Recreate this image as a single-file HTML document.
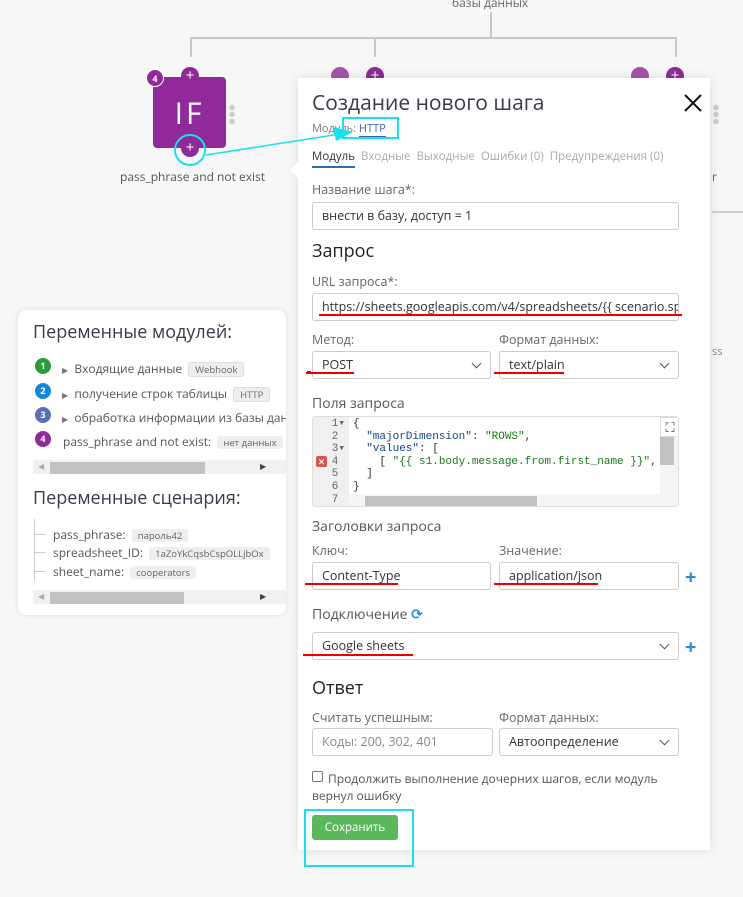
<!DOCTYPE html>
<html><head><meta charset="utf-8"><style>
*{box-sizing:border-box;margin:0;padding:0}
body{width:743px;height:897px;background:#f7f7f7;font-family:"Open Sans","Liberation Sans","DejaVu Sans",sans-serif;color:#555;position:relative;overflow:hidden;font-size:12px}
.a{position:absolute}
.ln{position:absolute;background:#c8c8c8}
.pc{position:absolute;width:18px;height:18px;border-radius:50%;background:#8e2b97;color:#fff;text-align:center;line-height:17px;font-size:15px}
.modal{position:absolute;left:298px;top:78px;width:412px;height:772px;background:#fff;box-shadow:0 0 10px rgba(0,0,0,.12)}
.lbl{position:absolute;font-size:12.5px;color:#666}
.inp{position:absolute;height:28px;border:1px solid #ccc;border-radius:3px;background:#fff;font-size:12.5px;color:#333;padding:0 9px;line-height:26px;white-space:nowrap;overflow:hidden}
.sel:after{content:"";position:absolute;right:10px;top:8px;width:6px;height:6px;border-right:1.5px solid #555;border-bottom:1.5px solid #555;transform:rotate(45deg)}
.h{position:absolute;font-size:18px;color:#222}
.h2{position:absolute;font-size:14px;color:#555}
.red{position:absolute;height:2px;background:#e00}
.plus{position:absolute;color:#2a8bd6;font-size:20px;font-weight:bold}
.pop{position:absolute;left:18px;top:310px;width:268px;height:305px;background:#fff;border-radius:8px;box-shadow:0 0 6px rgba(0,0,0,.1);overflow:hidden}
.num{position:absolute;width:16px;height:16px;border-radius:50%;color:#fff;font-size:9px;font-weight:bold;text-align:center;line-height:16px}
.tag{display:inline-block;background:#eee;border:1px solid #ddd;border-radius:3px;font-size:9.5px;padding:0 6px;line-height:13px;color:#666;margin-left:3px}
.row{position:absolute;font-size:12px;color:#555;white-space:nowrap}
.sb{position:absolute;height:14px;background:#f1f1f1}
.code{font-family:"Liberation Mono",monospace;font-size:11px;position:absolute;white-space:pre;line-height:12.6px}
</style></head><body>
<div class="a" style="left:452px;top:-6px;font-size:12px;color:#666">базы данных</div>
<div class="ln" style="left:490px;top:12px;width:2px;height:27px"></div>
<div class="ln" style="left:190px;top:37px;width:487px;height:2px"></div>
<div class="ln" style="left:190px;top:37px;width:2px;height:20px"></div>
<div class="ln" style="left:374px;top:37px;width:2px;height:20px"></div>
<div class="ln" style="left:675px;top:37px;width:2px;height:20px"></div>
<div class="a" style="left:153px;top:77px;width:73px;height:71px;background:#91299b;border-radius:4px;color:#fff;font-size:30px;text-align:center;line-height:72px;letter-spacing:3px">IF</div>
<div class="num" style="left:146px;top:69px;width:18px;height:18px;line-height:18px;background:#91299b;border:1px solid #fff">4</div>
<div class="pc" style="left:181px;top:67px">+</div>
<div class="pc" style="left:181px;top:139px">+</div>
<div class="pc" style="left:331px;top:67px;opacity:.8"></div><div class="pc" style="left:366px;top:67px">+</div>
<div class="pc" style="left:631px;top:67px;opacity:.8"></div><div class="pc" style="left:666px;top:67px">+</div>
<div class="a" style="left:229px;top:104px;width:6px;height:20px;background:radial-gradient(circle,#ccc 2.5px,transparent 3px) 0 0/6px 7px"></div>
<div class="a" style="left:713px;top:104px;width:6px;height:20px;background:radial-gradient(circle,#ccc 2.5px,transparent 3px) 0 0/6px 7px"></div>
<div class="a" style="left:120px;top:168px;font-size:12px;color:#555">pass_phrase and not exist</div>
<div class="a" style="left:712px;top:168px;font-size:12px;color:#666">r</div>
<div class="ln" style="left:712px;top:211px;width:31px;height:2px;background:#ccc"></div>
<div class="a" style="left:712px;top:344px;font-size:11px;color:#888">ss</div>

<div class="modal">
<div class="a" style="left:-8px;top:84px;width:0;height:0;border:8px solid transparent;border-right-color:#fff;border-left:0"></div>
<div class="a" style="left:14px;top:11px;font-size:21px;color:#3a3a4a">Создание нового шага</div>
<svg class="a" style="left:385px;top:15px" width="20" height="20"><path d="M2 2L18 18M18 2L2 18" stroke="#111" stroke-width="2"/></svg>
<div class="a" style="left:14px;top:43px;font-size:11px;color:#777">Модуль: <span style="color:#3b64b0;border-bottom:1px solid #3b64b0">HTTP</span></div>
<div class="a" style="left:44px;top:39px;width:57px;height:22px;border:2px solid #19e0ec"></div>
<div class="a" style="left:14px;top:71px;font-size:11.5px;color:#aaa;white-space:nowrap"><span style="color:#333;border-bottom:2px solid #2a6fb0;padding-bottom:2px">Модуль</span>&nbsp; Входные &nbsp;Выходные &nbsp;Ошибки (0) &nbsp;Предупреждения (0)</div>
<div class="lbl" style="left:14px;top:103px">Название шага*:</div>
<div class="inp" style="left:14px;top:124px;width:367px">внести в базу, доступ = 1</div>
<div class="h" style="left:14px;top:161px">Запрос</div>
<div class="lbl" style="left:14px;top:195px">URL запроса*:</div>
<div class="inp" style="left:14px;top:215px;width:367px">https://sheets.googleapis.com/v4/spreadsheets/{{ scenario.spreadsheet_ID }}</div>
<div class="red" style="left:21px;top:236px;width:363px"></div>
<div class="lbl" style="left:14px;top:253px">Метод:</div>
<div class="lbl" style="left:201px;top:253px">Формат данных:</div>
<div class="inp sel" style="left:14px;top:273px;width:179px">POST</div>
<div class="inp sel" style="left:201px;top:273px;width:180px">text/plain</div>
<div class="red" style="left:8px;top:294px;width:48px"></div>
<div class="red" style="left:196px;top:294px;width:70px"></div>
<div class="h2" style="left:14px;top:316px">Поля запроса</div>
<div class="a" style="left:14px;top:338px;width:367px;height:91px;border:1px solid #ddd;border-radius:3px;overflow:hidden">
 <div class="a" style="left:0;top:0;width:36px;height:91px;background:#f0f0f0"></div>
 <div class="code" style="left:4px;top:1px;color:#666;text-align:right;width:28px">1▾
2 
3▾
4 
5 
6 
7 </div>
 <div class="a" style="left:3px;top:39px;width:11px;height:11px;background:#d9534f;border-radius:2px;color:#fff;font-size:9px;line-height:11px;text-align:center">✕</div>
 <div class="code" style="left:40px;top:1px;color:#333">{
  <span style="color:#14428f">"majorDimension"</span>: <span style="color:#1a7a1a">"ROWS"</span>,
  <span style="color:#14428f">"values"</span>: [
    [ <span style="color:#1a7a1a">"{{ s1.body.message.from.first_name }}"</span>, {{ s
  ]
}</div>
 <div class="a" style="left:347px;top:0;width:20px;height:91px;background:#f5f5f5"></div>
 <div class="a" style="left:347px;top:18px;width:14px;height:30px;background:#c2c2c2"></div>
 <div class="a" style="left:347px;top:0;width:20px;height:20px;background:#fff;border:1px solid #ddd;font-size:13px;text-align:center;line-height:18px;color:#333">⛶</div>
 <div class="a" style="left:36px;top:77px;width:311px;height:14px;background:#f5f5f5"></div>
 <div class="a" style="left:52px;top:79px;width:172px;height:12px;background:#c2c2c2"></div>
</div>
<div class="h2" style="left:14px;top:439px">Заголовки запроса</div>
<div class="lbl" style="left:14px;top:464px">Ключ:</div>
<div class="lbl" style="left:201px;top:464px">Значение:</div>
<div class="inp" style="left:14px;top:484px;width:179px">Content-Type</div>
<div class="inp" style="left:201px;top:484px;width:180px">application/json</div>
<div class="red" style="left:8px;top:505px;width:92px"></div>
<div class="red" style="left:196px;top:505px;width:104px"></div>
<div class="plus" style="left:387px;top:485px">+</div>
<div class="h2" style="left:14px;top:527px">Подключение <span style="color:#2a8bd6;font-weight:bold">⟳</span></div>
<div class="inp sel" style="left:14px;top:554px;width:367px">Google sheets</div>
<div class="red" style="left:5px;top:576px;width:110px"></div>
<div class="plus" style="left:387px;top:555px">+</div>
<div class="h" style="left:14px;top:598px">Ответ</div>
<div class="lbl" style="left:14px;top:631px">Считать успешным:</div>
<div class="lbl" style="left:201px;top:631px">Формат данных:</div>
<div class="inp" style="left:14px;top:650px;width:181px;color:#888">Коды: 200, 302, 401</div>
<div class="inp sel" style="left:201px;top:650px;width:180px">Автоопределение</div>
<div class="a" style="left:14px;top:693px;width:11px;height:11px;border:1px solid #777;border-radius:2px"></div>
<div class="a" style="left:14px;top:692px;width:360px;font-size:12px;color:#555;line-height:17px;text-indent:16px">Продолжить выполнение дочерних шагов, если модуль вернул ошибку</div>
<div class="a" style="left:14px;top:737px;width:86px;height:25px;background:#5cb85c;border-radius:3px;color:#fff;font-size:11.5px;text-align:center;line-height:25px">Сохранить</div>
</div>
<div class="a" style="left:304px;top:809px;width:110px;height:58px;border:2px solid #19e0ec"></div>
<svg class="a" style="left:0;top:0;z-index:5" width="743" height="200"><circle cx="190" cy="150" r="15" fill="none" stroke="#19e0ec" stroke-width="2"/><line x1="206" y1="155" x2="340" y2="134" stroke="#19e0ec" stroke-width="1.5"/><polygon points="353,132 333,127 336,141" fill="#19e0ec"/></svg>

<div class="pop">
<div class="a" style="left:15px;top:10px;font-size:18px;color:#3a3a4a">Переменные модулей:</div>
<div class="num" style="left:17px;top:48px;background:#2a9a3a">1</div>
<div class="row" style="left:44px;top:50px"><span style="font-size:8px;color:#777">▶</span>&nbsp; Входящие данные <span class="tag">Webhook</span></div>
<div class="num" style="left:17px;top:73px;background:#1488d8">2</div>
<div class="row" style="left:44px;top:75px"><span style="font-size:8px;color:#777">▶</span>&nbsp; получение строк таблицы <span class="tag">HTTP</span></div>
<div class="num" style="left:17px;top:97px;background:#5a6fb8">3</div>
<div class="row" style="left:44px;top:99px"><span style="font-size:8px;color:#777">▶</span>&nbsp; обработка информации из базы данных</div>
<div class="num" style="left:17px;top:121px;background:#8e2b97">4</div>
<div class="row" style="left:45px;top:123px">pass_phrase and not exist: <span class="tag" style="border:0">нет данных</span></div>
<div class="sb" style="left:15px;top:150px;width:253px"></div>
<div class="a" style="left:32px;top:152px;width:155px;height:12px;background:#c2c2c2"></div>
<div class="a" style="left:20px;top:151px;font-size:8px;color:#aaa">◀</div>
<div class="a" style="left:242px;top:151px;font-size:8px;color:#444">▶</div>
<div class="a" style="left:15px;top:176px;font-size:18px;color:#3a3a4a">Переменные сценария:</div>
<div class="a" style="left:16px;top:209px;width:1px;height:62px;background:#ccc"></div>
<div class="a" style="left:16px;top:224px;width:12px;height:1px;background:#ccc"></div>
<div class="a" style="left:16px;top:242px;width:12px;height:1px;background:#ccc"></div>
<div class="a" style="left:16px;top:261px;width:12px;height:1px;background:#ccc"></div>
<div class="row" style="left:35px;top:216px">pass_phrase: <span class="tag" style="border:0">пароль42</span></div>
<div class="row" style="left:35px;top:234px">spreadsheet_ID: <span class="tag" style="border:0">1aZoYkCqsbCspOLLjbOx</span></div>
<div class="row" style="left:35px;top:253px">sheet_name: <span class="tag" style="border:0">cooperators</span></div>
<div class="sb" style="left:15px;top:280px;width:253px"></div>
<div class="a" style="left:32px;top:282px;width:134px;height:12px;background:#c2c2c2"></div>
<div class="a" style="left:20px;top:281px;font-size:8px;color:#aaa">◀</div>
<div class="a" style="left:242px;top:281px;font-size:8px;color:#444">▶</div>
</div>
<div class="red" style="left:307px;top:371px;width:4px"></div>
<div class="red" style="left:305px;top:583px;width:4px"></div>
</body></html>
